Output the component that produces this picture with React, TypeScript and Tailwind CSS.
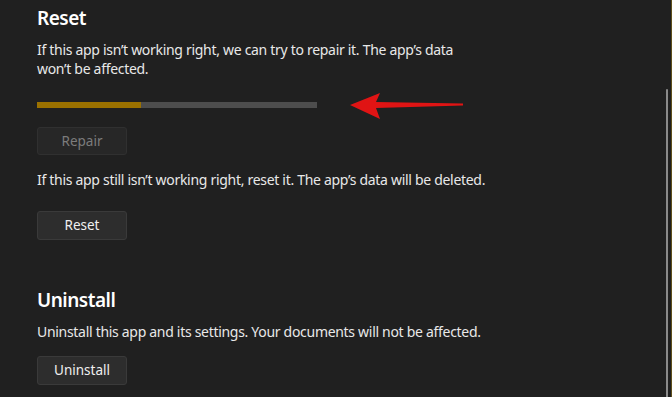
export default function App() {
  return (
    <div
      className="relative h-[397px] w-[672px] overflow-hidden bg-[#202020] text-white"
      style={{ fontFamily: '"Noto Sans", "Open Sans", sans-serif' }}
    >
      <div className="pl-[37px] pt-[4px]">
        {/* Reset */}
        <h2 className="text-[19px] font-semibold leading-[28px] tracking-[-0.5px]">Reset</h2>
        <p className="mt-[8px] w-[440px] text-[14px] leading-[19px] tracking-[-0.3px] text-[#e8e8e8]">
          If this app isn’t working right, we can try to repair it. The app’s data won’t be affected.
        </p>

        <div className="mt-[24px] flex h-[6px] w-[280px] bg-[#4d4d4d]">
          <div className="h-full w-[104px] bg-[#9b7100]" />
        </div>

        <button className="mt-[19px] block h-[28px] w-[90px] rounded-[3px] border border-[#303030] bg-[#272727] text-[13.5px] text-[#7c7c7c]">
          Repair
        </button>

        <p className="mt-[15px] text-[14px] leading-[19px] tracking-[-0.3px] text-[#e8e8e8]">
          If this app still isn’t working right, reset it. The app’s data will be deleted.
        </p>

        <button className="mt-[22px] block h-[29px] w-[90px] rounded-[3px] border border-[#3a3a3a] bg-[#2d2d2d] text-[13.5px] text-[#f0f0f0]">
          Reset
        </button>

        {/* Uninstall */}
        <h2 className="mt-[46px] text-[19px] font-semibold leading-[28px] tracking-[-0.5px]">Uninstall</h2>
        <p className="mt-[8px] text-[14px] leading-[19px] tracking-[-0.3px] text-[#e8e8e8]">
          Uninstall this app and its settings. Your documents will not be affected.
        </p>
        <button className="mt-[15px] block h-[29px] w-[90px] rounded-[3px] border border-[#3a3a3a] bg-[#2d2d2d] text-[13.5px] text-[#f0f0f0]">
          Uninstall
        </button>
      </div>

      {/* annotation arrow */}
      <svg className="absolute left-[348px] top-[90px]" width="118" height="32" viewBox="0 0 118 32">
        <path d="M2 15 L32 3 L28 12 L115 13.5 L115 15.5 L28 18 L32 29 Z" fill="#e01414" />
      </svg>

      {/* scrollbar */}
      <div className="absolute left-[666px] top-[89px] h-[320px] w-[2px] rounded-full bg-[#8a8a8a]" />
      <div className="absolute right-0 top-0 h-full w-[1px] bg-[#5f4f1c]" />
    </div>
  );
}
